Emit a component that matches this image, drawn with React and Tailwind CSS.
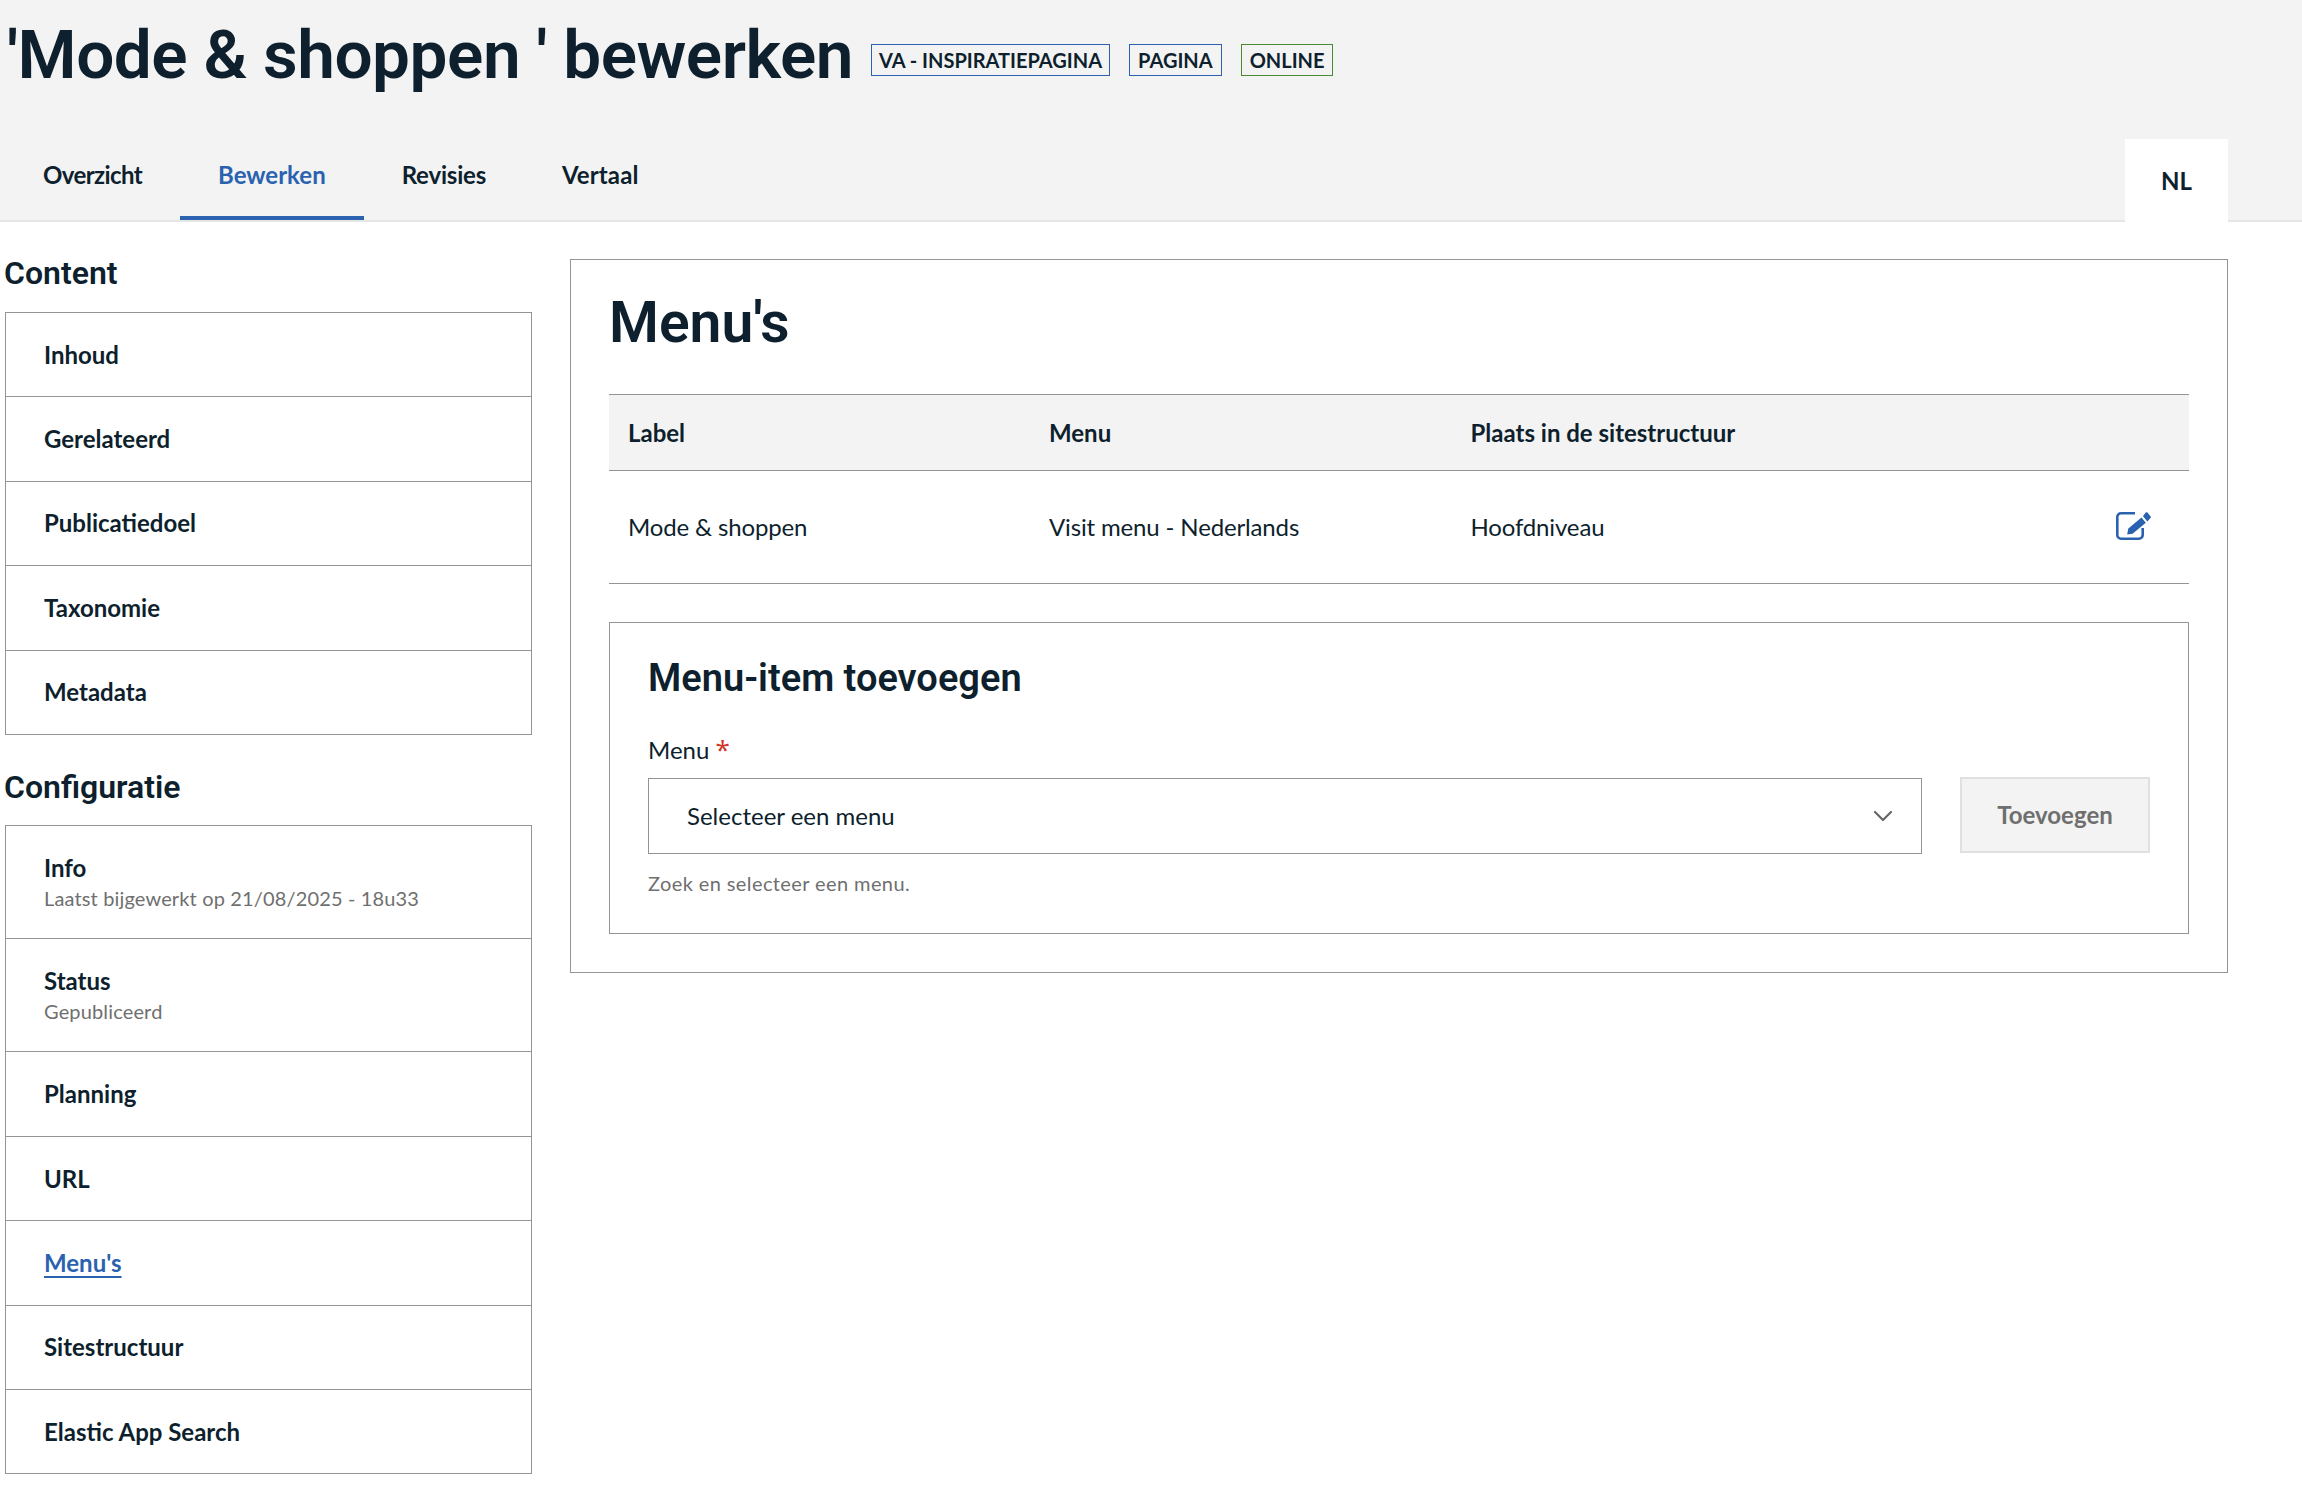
import React from "react";
import { ChevronDown } from "lucide-react";

const contentItems = ["Inhoud", "Gerelateerd", "Publicatiedoel", "Taxonomie", "Metadata"];
const configItems = [
  { label: "Info", sub: "Laatst bijgewerkt op 21/08/2025 - 18u33" },
  { label: "Status", sub: "Gepubliceerd" },
  { label: "Planning" },
  { label: "URL" },
  { label: "Menu's", active: true },
  { label: "Sitestructuur" },
  { label: "Elastic App Search" },
];

function EditIcon() {
  return (
    <svg width="35" height="28" viewBox="0 0 35 28" className="text-[#2a62b0]">
      <path d="M19 1.3H5A3.7 3.7 0 0 0 1.3 5v18A3.7 3.7 0 0 0 5 26.7h18a3.7 3.7 0 0 0 3.7-3.7v-7" fill="none" stroke="currentColor" strokeWidth="2.6" />
      <path d="M12.3 16.5 25.5 5.5l4.3 5.2-13.2 11-5.4.9z" fill="currentColor" />
      <path d="M27 4.2 29.6.6a1.5 1.5 0 0 1 1.9 0l3 3.6a1.5 1.5 0 0 1-.2 2L31.3 9.4z" fill="currentColor" />
    </svg>
  );
}

function SideList({ items }) {
  return (
    <div className="border-t border-x border-[#949494]">
      {items.map((item) => (
        <div
          key={item.label}
          className={`px-[38px] flex flex-col justify-center border-b border-[#949494] ${item.sub ? "h-[113px]" : "h-[84.4px]"}`}
        >
          <span className={`text-[24px] leading-[32px] font-bold ${item.active ? "text-[#2a62b0] underline decoration-2 underline-offset-4" : ""}`}>
            {item.label}
          </span>
          {item.sub && <span className="text-[20px] leading-[29px] text-[#6f6f6f] tracking-[0.15px]">{item.sub}</span>}
        </div>
      ))}
    </div>
  );
}

export default function App() {
  return (
    <div className="min-h-screen bg-white text-[#0e1f2d] font-['Lato',sans-serif]">
      {/* Header */}
      <div className="bg-[#f3f3f3] h-[222px] border-b-2 border-[#e6e6e6] flex flex-col">
        <div className="h-[114px] shrink-0 pl-[7px] flex items-center gap-[18px]">
          <h1 className="text-[67.5px] leading-[80px] font-semibold font-['Roboto',sans-serif] tracking-[-0.5px] mt-[-4px]">
            'Mode &amp; shoppen ' bewerken
          </h1>
          <div className="flex gap-[19px] mt-[6px] text-[20px] font-bold">
            <span className="border border-[#2a62b0] px-[7px] h-[32px] flex items-center">VA - INSPIRATIEPAGINA</span>
            <span className="border border-[#2a62b0] px-[8px] h-[32px] flex items-center">PAGINA</span>
            <span className="border border-[#4c8a2f] px-[8px] h-[32px] flex items-center">ONLINE</span>
          </div>
        </div>
        <div className="h-[106px] shrink-0 flex justify-between pr-[74px]">
          <div className="flex mt-[25px] text-[24px] font-bold">
            <div className="pl-[43px] pr-[38px] h-[81px] pt-[18px] tracking-[-0.6px]">Overzicht</div>
            <div className="px-[38px] h-[81px] pt-[18px] text-[#2a62b0] border-b-4 border-[#2a62b0]">Bewerken</div>
            <div className="px-[38px] h-[81px] pt-[18px] tracking-[-0.2px]">Revisies</div>
            <div className="px-[38px] h-[81px] pt-[18px] tracking-[0.1px]">Vertaal</div>
          </div>
          <div className="w-[103px] h-[83px] mt-[25px] bg-white flex items-center justify-center text-[24px] font-bold relative z-10">NL</div>
        </div>
      </div>

      <div className="flex pl-[5px] pr-[74px] gap-[38px]">
        {/* Sidebar */}
        <div className="w-[527px] shrink-0">
          <h2 className="h-[90px] pt-[29px] text-[32px] leading-[44px] font-semibold font-['Roboto',sans-serif] ml-[-1px]">Content</h2>
          <SideList items={contentItems.map((label) => ({ label }))} />
          <h2 className="h-[90.5px] pt-[30px] text-[32px] leading-[44px] font-semibold font-['Roboto',sans-serif] ml-[-1px]">Configuratie</h2>
          <SideList items={configItems} />
        </div>

        {/* Main panel */}
        <div className="flex-1 mt-[37px] h-[714px] border border-[#949494] px-[38px] pt-[27px]">
          <h2 className="text-[57px] leading-[72px] font-semibold font-['Roboto',sans-serif] h-[107px]">Menu's</h2>

          <div className="grid grid-cols-[421px_421.5px_1fr_80px] h-[77px] items-center bg-[#f3f3f3] border-y border-[#949494] text-[24px] font-bold">
            <div className="pl-[19px]">Label</div>
            <div className="pl-[19px]">Menu</div>
            <div className="pl-[19px]">Plaats in de sitestructuur</div>
            <div />
          </div>
          <div className="grid grid-cols-[421px_421.5px_1fr_80px] h-[113px] items-center border-b border-[#949494] text-[24px] tracking-[-0.15px]">
            <div className="pl-[19px]">Mode &amp; shoppen</div>
            <div className="pl-[19px]">Visit menu - Nederlands</div>
            <div className="pl-[19px]">Hoofdniveau</div>
            <div className="flex justify-end pr-[38px] pb-[2px]">
              <EditIcon />
            </div>
          </div>

          {/* Add form */}
          <div className="mt-[38px] h-[312px] border border-[#949494] px-[38px] pt-[29px]">
            <h3 className="text-[38px] leading-[52px] font-semibold font-['Roboto',sans-serif]">Menu-item toevoegen</h3>
            <div className="mt-[30px] text-[24px] leading-[32px]">
              Menu <span className="text-[#d0342c] font-['Noto_Sans',sans-serif] text-[26px] leading-[26px]">*</span>
            </div>
            <div className="mt-[10px] flex gap-[38px] items-start">
              <div className="flex-1 h-[76px] mt-[2px] border border-[#949494] pl-[38px] pr-[22px] flex items-center justify-between text-[24px]">
                <span>Selecteer een menu</span>
                <ChevronDown size={32} strokeWidth={1.6} className="text-[#666666]" />
              </div>
              <button className="w-[190px] h-[76px] mt-[1px] bg-[#f3f3f3] border-2 border-[#e0e0e0] text-[#6f6f6f] text-[24px] font-bold">Toevoegen</button>
            </div>
            <div className="mt-[14px] text-[20px] leading-[30px] text-[#6f6f6f] tracking-[0.4px]">Zoek en selecteer een menu.</div>
          </div>
        </div>
      </div>
    </div>
  );
}
